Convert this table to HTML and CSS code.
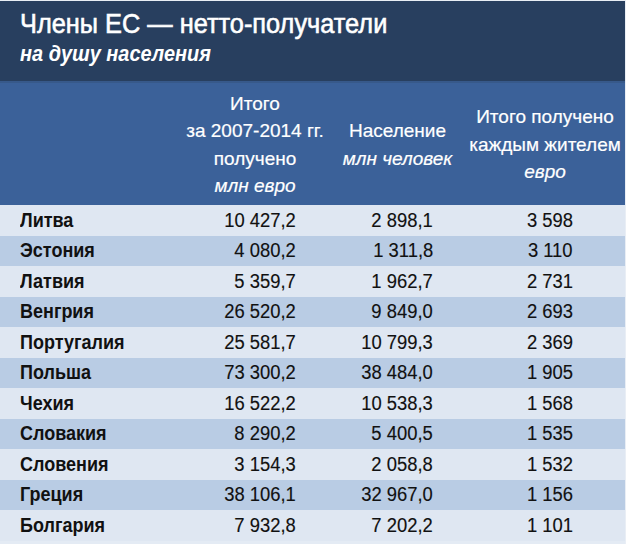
FILE: index.html
```html
<!DOCTYPE html>
<html lang="ru">
<head>
<meta charset="utf-8">
<link rel="stylesheet" href="styles.css">
</head>
<body>
<div class="sheet">
  <div class="titlebar">
    <div class="title"><span class="squeeze">Члены ЕС — нетто-получатели</span></div>
    <div class="subtitle"><span class="squeeze">на душу населения</span></div>
  </div>
  <div class="head">
    <div></div>
    <div class="hcell">Итого<br>за 2007-2014 гг.<br>получено<br><i>млн евро</i></div>
    <div class="hcell">Население<br><i>млн человек</i></div>
    <div class="hcell">Итого получено<br>каждым жителем<br><i>евро</i></div>
  </div>
  <div class="rows">
    <div class="row"><span class="name"><span class="t">Литва</span></span><span class="val"><span class="t">10 427,2</span></span><span class="val"><span class="t">2 898,1</span></span><span class="val"><span class="t">3 598</span></span></div>
    <div class="row"><span class="name"><span class="t">Эстония</span></span><span class="val"><span class="t">4 080,2</span></span><span class="val"><span class="t">1 311,8</span></span><span class="val"><span class="t">3 110</span></span></div>
    <div class="row"><span class="name"><span class="t">Латвия</span></span><span class="val"><span class="t">5 359,7</span></span><span class="val"><span class="t">1 962,7</span></span><span class="val"><span class="t">2 731</span></span></div>
    <div class="row"><span class="name"><span class="t">Венгрия</span></span><span class="val"><span class="t">26 520,2</span></span><span class="val"><span class="t">9 849,0</span></span><span class="val"><span class="t">2 693</span></span></div>
    <div class="row"><span class="name"><span class="t">Португалия</span></span><span class="val"><span class="t">25 581,7</span></span><span class="val"><span class="t">10 799,3</span></span><span class="val"><span class="t">2 369</span></span></div>
    <div class="row"><span class="name"><span class="t">Польша</span></span><span class="val"><span class="t">73 300,2</span></span><span class="val"><span class="t">38 484,0</span></span><span class="val"><span class="t">1 905</span></span></div>
    <div class="row"><span class="name"><span class="t">Чехия</span></span><span class="val"><span class="t">16 522,2</span></span><span class="val"><span class="t">10 538,3</span></span><span class="val"><span class="t">1 568</span></span></div>
    <div class="row"><span class="name"><span class="t">Словакия</span></span><span class="val"><span class="t">8 290,2</span></span><span class="val"><span class="t">5 400,5</span></span><span class="val"><span class="t">1 535</span></span></div>
    <div class="row"><span class="name"><span class="t">Словения</span></span><span class="val"><span class="t">3 154,3</span></span><span class="val"><span class="t">2 058,8</span></span><span class="val"><span class="t">1 532</span></span></div>
    <div class="row"><span class="name"><span class="t">Греция</span></span><span class="val"><span class="t">38 106,1</span></span><span class="val"><span class="t">32 967,0</span></span><span class="val"><span class="t">1 156</span></span></div>
    <div class="row"><span class="name"><span class="t">Болгария</span></span><span class="val"><span class="t">7 932,8</span></span><span class="val"><span class="t">7 202,2</span></span><span class="val"><span class="t">1 101</span></span></div>
  </div>
</div>
</body>
</html>
```
FILE: styles.css
```css
html, body {
  margin: 0;
  padding: 0;
  background: #e9eef5;
}
.sheet {
  width: 625px;
  height: 543px;
  margin-top: 1px;
  font-family: "Liberation Sans", Arial, sans-serif;
  color: #111;
  background: #e4ebf4;
  overflow: hidden;
}
.squeeze {
  display: inline-block;
  transform: scaleX(0.905);
  transform-origin: left center;
  white-space: nowrap;
}
.titlebar {
  background: #283f5f;
  height: 82px;
  box-sizing: border-box;
  padding: 7px 0 0 20px;
  color: #fff;
  border-bottom: 2px solid #37598a;
}
.title {
  font-size: 28px;
  line-height: 32px;
  -webkit-text-stroke: 0.6px #fff;
}
.subtitle {
  font-size: 22px;
  font-weight: bold;
  font-style: italic;
  line-height: 26px;
  margin-top: 1px;
}
.head {
  display: grid;
  grid-template-columns: 180px 150px 135px 1fr;
  align-items: center;
  height: 122px;
  box-sizing: border-box;
  padding-top: 1px;
  background: #3b6199;
  color: #fff;
}
.hcell {
  text-align: center;
  font-size: 19px;
  line-height: 27.5px;
  white-space: nowrap;
  -webkit-text-stroke: 0.2px #fff;
}
.hcell i {
  font-style: italic;
}
.rows {
  display: flex;
  flex-direction: column;
}
.row {
  display: grid;
  grid-template-columns: 180px 150px 135px 1fr;
  align-items: center;
  height: 30.5px;
  font-size: 20px;
  background: #dfe7f2;
}
.row:nth-child(even) {
  background: #b9cce4;
}
.t {
  display: inline-block;
  white-space: nowrap;
}
.name {
  padding-left: 20px;
}
.name .t {
  font-weight: bold;
  transform: scaleX(0.9);
  transform-origin: left center;
}
.val {
  text-align: right;
}
.val .t {
  transform: scaleX(0.92);
  transform-origin: right center;
  -webkit-text-stroke: 0.15px #111;
}
.val:nth-child(2) { padding-right: 34px; }
.val:nth-child(3) { padding-right: 32px; }
.val:nth-child(4) { padding-right: 52px; }
```
